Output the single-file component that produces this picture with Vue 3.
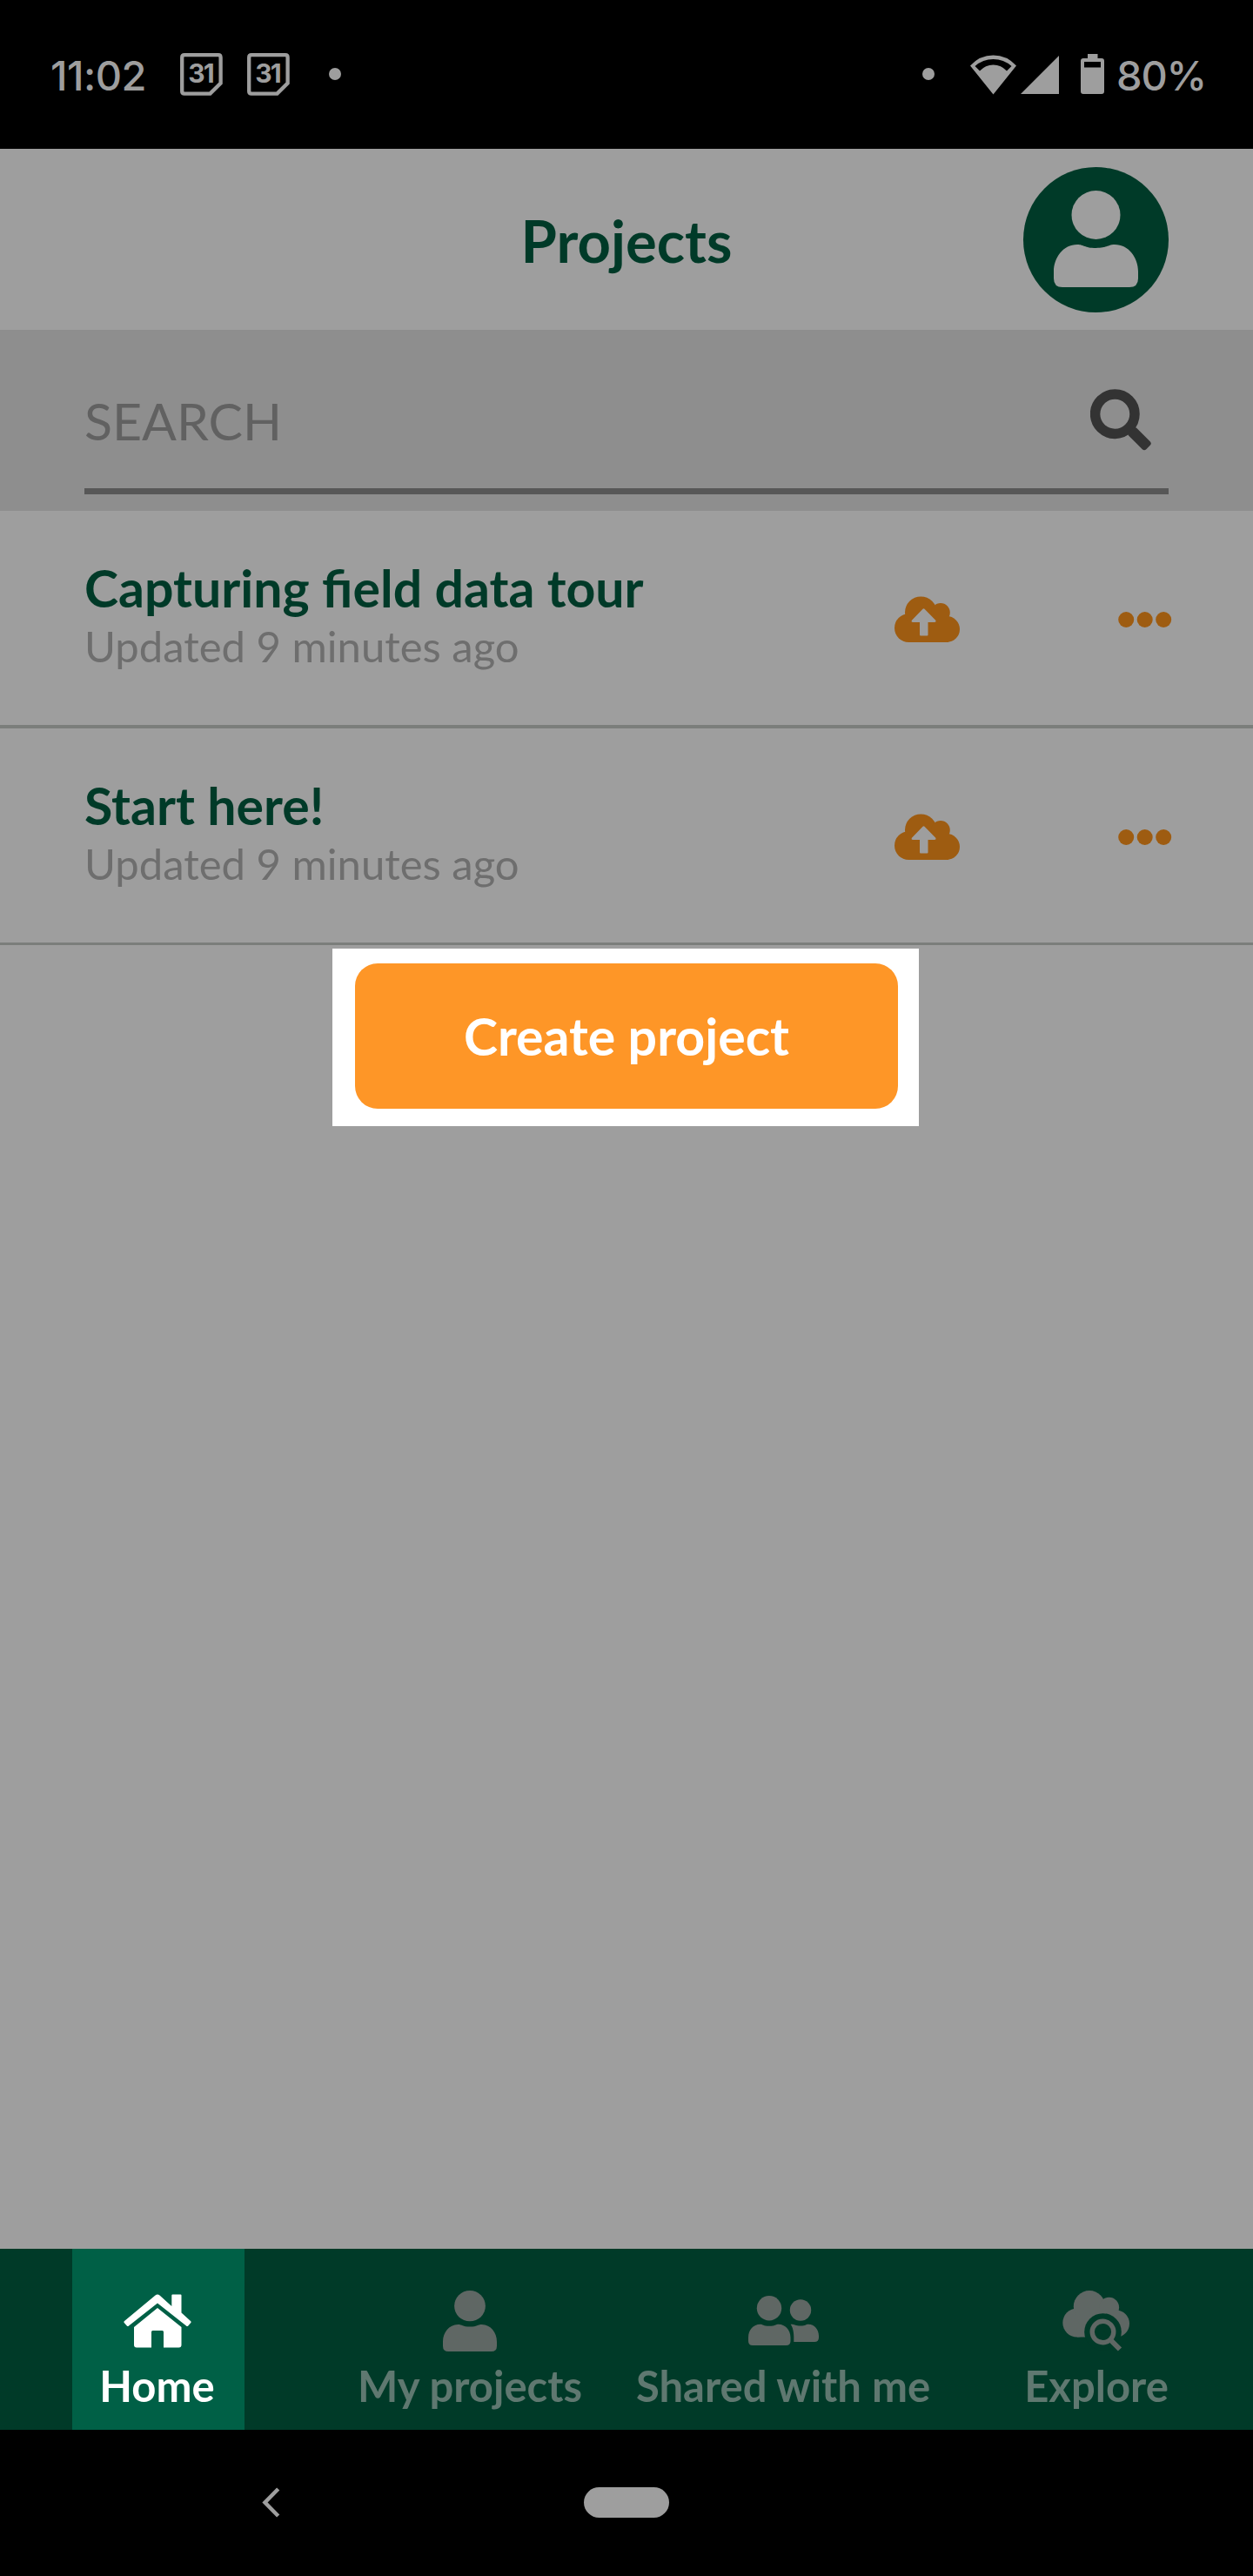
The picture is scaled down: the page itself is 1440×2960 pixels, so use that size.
<script setup>
const projects = [
  { name: 'Capturing field data tour', updated: 'Updated 9 minutes ago', cls: 'tour' },
  { name: 'Start here!', updated: 'Updated 9 minutes ago', cls: 'start' },
]
</script>

<template>
  <div class="screen">
    <svg class="defs" width="0" height="0">
      <symbol id="person" viewBox="0 0 97 111" preserveAspectRatio="none">
        <circle cx="48.5" cy="28" r="28" />
        <path d="M0 93C0 77 11 62 27 62C35 62 35 66 48.500 66C62 66 62 62 70 62C86 62 97 77 97 93V101Q97 111 87 111H10Q0 111 0 101Z" />
      </symbol>
      <symbol id="calendar" viewBox="0 0 49 49">
        <path d="M5 2.200H44Q46.600 2.200 46.600 5V34.500L34.500 46.600H5Q2.200 46.600 2.200 44V5Q2.200 2.200 5 2.200Z" fill="none" stroke="#9e9e9e" stroke-width="4.300" />
      </symbol>
    </svg>

    <header class="status">
      <span class="time">11:02</span>
      <span class="cal"><svg width="49" height="49"><use href="#calendar" /></svg><b>31</b></span>
      <span class="cal second"><svg width="49" height="49"><use href="#calendar" /></svg><b>31</b></span>
      <i class="dot"></i>
      <i class="dot right"></i>
      <svg class="wifi" width="53" height="46" viewBox="0 0 53 46">
        <path fill-rule="evenodd" d="M0 12.500Q11 .5 26.500 .5T53 12.500L26.500 45.500ZM5.500 13L11 18.500Q17.500 11.500 26.500 11.500T42 18.500L47.500 13Q38.500 5 26.500 5T5.500 13Z" />
      </svg>
      <svg class="signal" width="44" height="44" viewBox="0 0 44 44"><path d="M44 0V44H0Z" /></svg>
      <svg class="battery" width="27" height="46" viewBox="0 0 27 46">
        <path fill-rule="evenodd" d="M8 0H19.500V5H24Q27 5 27 8V43Q27 46 24 46H3Q0 46 0 43V8Q0 5 3 5H8ZM4 9V15.500H23V9Z" />
      </svg>
      <span class="percent">80%</span>
    </header>

    <div class="titlebar">
      <h1>Projects</h1>
      <div class="avatar"><svg width="97" height="111"><use href="#person" /></svg></div>
    </div>

    <div class="search">
      <div class="field">
        <span>SEARCH</span>
        <svg width="71" height="71" viewBox="0 0 71 71">
          <circle cx="28.300" cy="28.700" r="22.700" fill="none" stroke="#333" stroke-width="11.500" />
          <rect x="0" y="-6.300" width="28" height="12.600" rx="3.200" fill="#333" transform="translate(46.700 47.200)rotate(45)" />
        </svg>
      </div>
    </div>

    <main>
      <section v-for="p in projects" :key="p.name" class="row" :class="p.cls">
        <div class="info">
          <h2>{{ p.name }}</h2>
          <p>{{ p.updated }}</p>
        </div>
        <svg class="cloud" width="75" height="53" viewBox="0 0 75 53">
          <circle cx="16.300" cy="36.600" r="16.300" /><circle cx="30.300" cy="18.700" r="18.300" />
          <circle cx="53" cy="18.800" r="10.800" /><circle cx="60" cy="38" r="15" />
          <path d="M16 22H62V53H16Z" />
          <path fill="#9e9e9e" d="M32.500 14.700Q33.500 13.800 34.500 14.700L47.500 28Q48 30 46 30H38.500V44.500Q38.500 45.500 37.500 45.500H30Q29 45.500 29 44.500V30H21Q19 30 19.700 28Z" />
        </svg>
        <svg class="more" width="62" height="18" viewBox="0 0 62 18">
          <circle cx="9.200" cy="9" r="9" /><circle cx="30.700" cy="9" r="9" /><circle cx="52.200" cy="9" r="9" />
        </svg>
      </section>

      <div class="spotlight"><button>Create project</button></div>
    </main>

    <nav class="tabs">
      <div class="tab active">
        <svg class="ic-home" width="78" height="62" viewBox="0 0 78 62">
          <path d="M36.500 1.500Q39 -.7 41.500 1.500L55.300 14V1.500Q55.300 .5 56.300 .5H65.500Q66.500 .5 66.500 1.500V21.500L77 31Q78 32 77.300 33L74.300 36.500Q73 37.500 72 36.500L39 10.500L6 36.500Q5 37.500 3.800 36.500L.7 33Q0 32 1 31Z" />
          <path d="M39 16L66.500 38V58.500Q66.500 61.500 63.500 61.500H46V43.500Q46 42 44.500 42H33.500Q32 42 32 43.500V61.500H15Q12 61.500 12 58.500V38Z" />
        </svg>
        <span>Home</span>
      </div>
      <div class="tab">
        <svg class="ic-person" width="62" height="70"><use href="#person" /></svg>
        <span>My projects</span>
      </div>
      <div class="tab">
        <svg class="ic-people" width="81" height="57" viewBox="0 0 81 57">
          <circle cx="24" cy="14.300" r="14.200" /><circle cx="60" cy="16.500" r="12.200" />
          <path d="M0 48C0 39 6 32.700 13.500 32.700C17 32.700 17 34.800 24 34.800S31 32.700 35 32.700C42 32.700 48.500 39 48.500 48V52Q48.500 57 43.500 57H5Q0 57 0 52Z" />
          <path d="M48.600 32.700C54 32.700 54 34.500 60 34.500S66 32.700 69 32.700C76 32.700 81 39 81 46V48Q81 53 76 53H52.300C52.500 45 52.300 38 48.600 32.700Z" />
        </svg>
        <span>Shared with me</span>
      </div>
      <div class="tab">
        <svg class="ic-explore" width="78" height="70" viewBox="0 0 78 70">
          <circle cx="16.800" cy="37" r="16.500" /><circle cx="31" cy="18.300" r="18.200" />
          <circle cx="53.600" cy="19.300" r="11.500" /><circle cx="61.500" cy="38" r="15.500" />
          <path d="M17 20H60V53.500H17Z" />
          <circle cx="46.500" cy="47.500" r="21.300" fill="#003a28" />
          <path d="M46 46L67.500 62L60 70L46 60Z" fill="#003a28" />
          <circle cx="46.500" cy="47.500" r="12.300" fill="none" stroke="#5f6764" stroke-width="5.400" />
          <path d="M56 57.500L66 67.500" stroke="#5f6764" stroke-width="6" />
        </svg>
        <span>Explore</span>
      </div>
    </nav>

    <footer class="system">
      <svg class="back" width="21" height="35" viewBox="0 0 21 35"><path d="M18.700 2L3.500 17.500L18.700 33" fill="none" stroke="#9e9e9e" stroke-width="4.500" /></svg>
      <i class="pill"></i>
    </footer>
  </div>
</template>

<style>
body { margin: 0; background: #000; }
</style>

<style scoped>
.screen { width: 1440px; height: 2960px; display: flex; flex-direction: column; background: #9e9e9e; font-family: Lato, sans-serif; overflow: hidden; }
.defs { position: absolute; }
svg { display: block; flex: none; }
h1, h2, p { margin: 0; white-space: nowrap; }
span { white-space: nowrap; }

.status { height: 171px; flex: none; box-sizing: border-box; padding: 61px 0 0 58px; display: flex; align-items: flex-start; background: #000; color: #9e9e9e; fill: #9e9e9e; font-family: Inter, sans-serif; }
.time { width: 149px; font-size: 47px; line-height: 52px; font-weight: 500; letter-spacing: -.5px; }
.cal { display: grid; width: 49px; margin-right: 28px; }
.cal svg, .cal b { grid-area: 1 / 1; }
.cal b { font-size: 30px; line-height: 47px; font-weight: 700; text-align: center; letter-spacing: -2px; padding-right: 2px; }
.cal.second { margin-right: 45px; }
.dot { width: 14px; height: 14px; margin-top: 17px; border-radius: 50%; background: #9e9e9e; }
.dot.right { margin-left: 668px; }
.wifi { margin: 2px 0 0 41px; }
.signal { margin: 3px 0 0 5px; }
.battery { margin: 1px 0 0 25px; }
.percent { margin-left: 14px; font-size: 47px; line-height: 52px; font-weight: 500; letter-spacing: -1.2px; }

.titlebar { height: 208px; flex: none; box-sizing: border-box; display: grid; grid-template-columns: 1fr 240px 1fr; padding-right: 97px; padding-left: 97px; align-items: center; color: #003a28; }
h1 { grid-column: 2; justify-self: center; font-size: 67px; line-height: 82px; font-weight: 700; padding-top: 1px; }
.avatar { justify-self: end; width: 167px; height: 167px; border-radius: 50%; background: #003a28; fill: #9e9e9e; display: flex; justify-content: center; padding-top: 27px; box-sizing: border-box; }

.search { height: 208px; flex: none; box-sizing: border-box; padding: 0 97px; background: #8e8e8e; }
.field { height: 182px; border-bottom: 7px solid #575757; display: flex; justify-content: space-between; padding-right: 19px; }
.field span { padding-top: 69px; font-size: 59px; line-height: 72px; color: #616161; }
.field svg { margin-top: 68px; }

main { flex: 1; }
.row { height: 250px; box-sizing: border-box; border-bottom: 4px solid #7b7e7b; display: flex; padding-left: 97px; fill: #9e5c11; }
.row.start { height: 249px; border-bottom-width: 3px; }
.info { width: 931px; padding-top: 53px; }
h2 { font-size: 59px; line-height: 72px; font-weight: 700; color: #003a28; }
.info p { font-size: 49px; line-height: 60px; color: #6e6e6e; }
.cloud { margin-top: 98px; }
.more { margin: 116px 0 0 182px; }

.spotlight { width: 674px; height: 204px; box-sizing: border-box; margin: 4px 0 0 382px; padding: 17px 24px 20px 26px; background: #fff; }
button { display: block; width: 624px; height: 167px; border: 0; border-radius: 26px; padding: 0; background: #fe9627; color: #fff; font: 700 59px/72px Lato, sans-serif; }

.tabs { height: 208px; flex: none; display: grid; grid-template-columns: repeat(4, 360px); background: #003a28; color: #5f7870; fill: #5f6764; }
.tab { display: flex; flex-direction: column; align-items: center; font-size: 49px; line-height: 60px; font-weight: 700; }
.tab svg { margin-bottom: auto; }
.tab span { margin-bottom: 21px; }
.active { margin: 0 79px 0 83px; padding-right: 3px; background: #006046; color: #fff; fill: #fff; }
.ic-home { margin-top: 52px; }
.ic-person { margin-top: 48px; }
.ic-people { margin-top: 54px; }
.ic-explore { margin-top: 48px; }

.system { height: 168px; flex: none; box-sizing: border-box; padding: 66px 0 0 301px; display: flex; align-items: flex-start; background: #000; }
.pill { width: 98px; height: 35px; margin-left: 349px; border-radius: 18px; background: #9e9e9e; }
</style>
